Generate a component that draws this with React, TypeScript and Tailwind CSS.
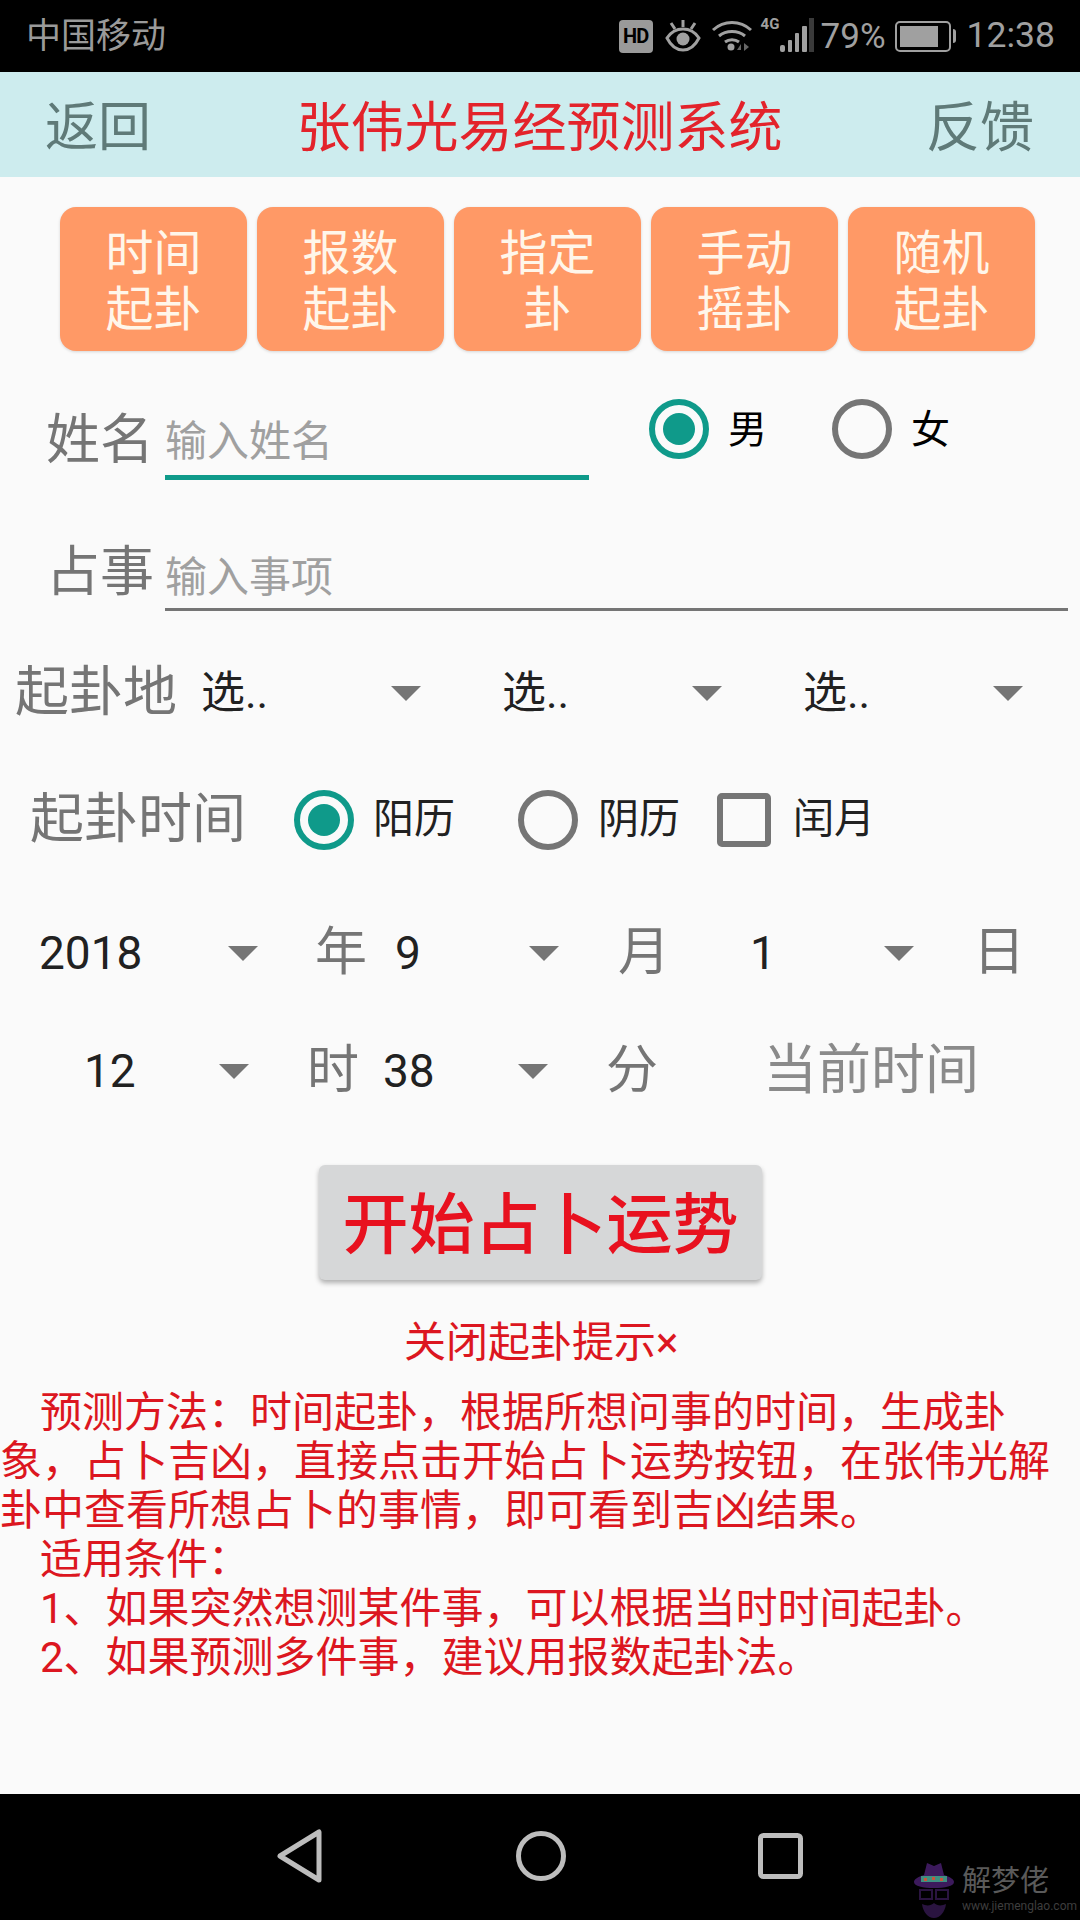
import { ReactNode } from 'react';

const methods = [
  ['时间', '起卦'],
  ['报数', '起卦'],
  ['指定', '卦'],
  ['手动', '摇卦'],
  ['随机', '起卦'],
];

// full-width comma and colon
const tips = [
  { text: '预测方法\uFF1A时间起卦\uFF0C根据所想问事的时间\uFF0C生成卦', indent: true },
  { text: '象\uFF0C占卜吉凶\uFF0C直接点击开始占卜运势按钮\uFF0C在张伟光解', indent: false },
  { text: '卦中查看所想占卜的事情\uFF0C即可看到吉凶结果。', indent: false },
  { text: '适用条件\uFF1A', indent: true },
  { text: '1、如果突然想测某件事\uFF0C可以根据当时时间起卦。', indent: true },
  { text: '2、如果预测多件事\uFF0C建议用报数起卦法。', indent: true },
];

const Radio = ({ checked }: { checked?: boolean }) => (
  <div
    className={`flex h-[60px] w-[60px] shrink-0 items-center justify-center rounded-full border-[6px] ${
      checked ? 'border-[#0f9a8a]' : 'border-[#757575]'
    }`}
  >
    {checked && <div className="h-[32px] w-[32px] rounded-full bg-[#0f9a8a]" />}
  </div>
);

const Arrow = () => <div className="h-0 w-0 border-x-[15px] border-t-[15px] border-x-transparent border-t-[#757575]" />;

// spinner: value on the left, small triangle at the right edge
const Spinner = ({ value, className }: { value: string; className: string }) => (
  <div className={`flex items-center justify-between ${className}`}>
    <span>{value}</span>
    <Arrow />
  </div>
);

const Row = ({ className, children }: { className: string; children: ReactNode }) => (
  <div className={`flex items-center ${className}`}>{children}</div>
);

const StatusIcons = () => (
  <div className="flex items-center text-[#a0a0a0]">
    <div className="flex h-[33px] w-[34px] items-center justify-center rounded-[4px] bg-[#9a9a9a] text-[20px] font-bold leading-none tracking-[-1px] text-black">
      HD
    </div>
    <svg className="ml-[12px]" width="36" height="32" viewBox="0 0 36 32" fill="none" stroke="#a0a0a0" strokeWidth="3">
      <path d="M2 18c4-6 9-9 16-9s12 3 16 9c-4 8-9 12-16 12S6 26 2 18z" />
      <circle cx="18" cy="19" r="6.5" fill="#a0a0a0" stroke="none" />
      <path d="M18 0v7M6 3l4 6M30 3l-4 6" />
    </svg>
    <svg className="ml-[10px]" width="42" height="32" viewBox="0 0 42 32" fill="none" stroke="#a0a0a0" strokeWidth="3">
      <path d="M2 10c11-10 27-10 38 0M8 16c7-6 19-6 26 0M14 22c4-3 10-3 14 0" />
      <circle cx="20" cy="27" r="3.5" fill="#a0a0a0" stroke="none" />
      <path d="M26 30l4-6v6zM33 23v8l5-4z" fill="#666" stroke="none" />
    </svg>
    <div className="relative ml-[8px] h-[36px] w-[54px]">
      <span className="absolute left-0 top-[-2px] text-[15px] font-bold leading-[16px]">4G</span>
      <svg className="absolute left-0 top-0" width="54" height="36" viewBox="0 0 54 36" fill="#a0a0a0">
        <rect x="19" y="27" width="5" height="7" rx="2" />
        <rect x="27" y="22" width="4" height="12" rx="1" />
        <rect x="34" y="15" width="4" height="19" rx="1" />
        <rect x="41" y="8" width="5" height="26" rx="1" />
        <rect x="48" y="0" width="5" height="34" fill="#3a3a3a" />
      </svg>
    </div>
    <span className="ml-[6px] text-[35px] leading-none">79%</span>
    <div className="ml-[9px] flex items-center">
      <div className="h-[31px] w-[56px] rounded-[5px] border-2 border-[#a0a0a0] p-[3px]">
        <div className="h-full w-[38px] bg-[#a0a0a0]" />
      </div>
      <div className="ml-[2px] h-[14px] w-[3px] rounded-r bg-[#a0a0a0]" />
    </div>
    <span className="ml-[11px] text-[35.5px] leading-none">12:38</span>
  </div>
);

export default function App() {
  return (
    <div className="flex h-[1920px] w-[1080px] flex-col overflow-hidden bg-[#fafafa] font-['Roboto','Noto_Sans_CJK_SC',sans-serif]">
      <div className="flex h-[72px] shrink-0 items-center justify-between bg-black pl-[26px] pr-[25px]">
        <span className="text-[35px] leading-none text-[#9a9a9a]">中国移动</span>
        <StatusIcons />
      </div>

      <div className="flex h-[105px] shrink-0 items-center justify-between bg-[#cdecee] pl-[45px] pr-[46px] pt-[8px] text-[53px] leading-none text-[#5f7a78]">
        <span>返回</span>
        <span className="ml-[2px] text-[54px] text-[#e3232b]">张伟光易经预测系统</span>
        <span className="text-[54px]">反馈</span>
      </div>

      <div className="mt-[30px] flex h-[144px] shrink-0 gap-[10px] pl-[60px]">
        {methods.map((m, i) => (
          <div
            key={i}
            className="flex h-[144px] w-[187px] flex-col items-center justify-center rounded-[16px] bg-[#ff9966] pt-[6px] text-[48px] leading-[56px] text-[#fff6ea] shadow-[0_1px_3px_rgba(0,0,0,0.15)]"
          >
            <span>{m[0]}</span>
            <span>{m[1]}</span>
          </div>
        ))}
      </div>

      <div className="relative mt-[40px] flex h-[90px] shrink-0 pl-[46px]">
        <span className="mt-[16px] w-[119px] text-[54px] leading-[68px] text-[#757575]">姓名</span>
        <div className="h-[89px] w-[424px] border-b-[5px] border-[#0f9a8a] pt-[22px] text-[42px] leading-[58px] text-[#a0a0a0]">
          输入姓名
        </div>
        <div className="ml-[60px] mt-[8px] flex h-[60px] items-center text-[39px] leading-none text-black">
          <Radio checked />
          <span className="ml-[19px] pt-[2px]">男</span>
          <div className="ml-[65px]">
            <Radio />
          </div>
          <span className="ml-[19px] pt-[2px]">女</span>
        </div>
      </div>

      <div className="mt-[41px] flex h-[89px] shrink-0 pl-[50px]">
        <span className="ml-[-4px] mt-[17px] w-[119px] text-[54px] leading-[68px] text-[#757575]">占事</span>
        <div className="h-[89px] w-[903px] border-b-[3px] border-[#757575] pt-[27px] text-[42px] leading-[58px] text-[#a0a0a0]">
          输入事项
        </div>
      </div>

      <Row className="mt-[42px] h-[80px] shrink-0 pl-[15px] text-[44px] text-[#212121]">
        <span className="w-[186px] text-[54px] leading-none text-[#757575]">起卦地</span>
        <Spinner value="选.." className="w-[220px]" />
        <Spinner value="选.." className="ml-[81px] w-[220px]" />
        <Spinner value="选.." className="ml-[81px] w-[220px]" />
      </Row>

      <Row className="mt-[47px] h-[80px] shrink-0 pl-[30px] text-[41px] text-[#212121]">
        <span className="w-[264px] text-[54px] leading-none text-[#757575]">起卦时间</span>
        <Radio checked />
        <span className="ml-[19px]">阳历</span>
        <div className="ml-[63px]">
          <Radio />
        </div>
        <span className="ml-[20px]">阴历</span>
        <div className="ml-[37px] h-[54px] w-[54px] rounded-[5px] border-[6px] border-[#757575]" />
        <span className="ml-[22px]">闰月</span>
      </Row>

      <Row className="mt-[58px] h-[70px] shrink-0 pl-[39px] text-[46px] text-[#212121]">
        <Spinner value="2018" className="w-[219px]" />
        <span className="ml-[57px] w-[80px] text-[52px] text-[#757575]">年</span>
        <Spinner value="9" className="w-[164px]" />
        <span className="ml-[59px] w-[132px] text-[52px] text-[#757575]">月</span>
        <Spinner value="1" className="w-[164px]" />
        <span className="ml-[59px] text-[52px] text-[#757575]">日</span>
      </Row>

      <Row className="mt-[48px] h-[70px] shrink-0 pl-[84px] text-[46px] text-[#212121]">
        <Spinner value="12" className="w-[165px]" />
        <span className="ml-[58px] w-[76px] text-[52px] text-[#757575]">时</span>
        <Spinner value="38" className="w-[165px]" />
        <span className="ml-[58px] w-[157px] text-[52px] text-[#757575]">分</span>
        <span className="text-[54px] leading-none text-[#8a8a8a]">当前时间</span>
      </Row>

      <div className="mt-[59px] ml-[319px] flex h-[115px] w-[443px] shrink-0 items-center justify-center rounded-[6px] bg-[#d6d7d8] pt-[6px] text-[66px] font-medium leading-none text-[#e8111f] shadow-[0_3px_5px_rgba(0,0,0,0.3)]">
        开始占卜运势
      </div>

      <div className="mt-[38px] shrink-0 pl-[404px] text-[42px] leading-[50px] text-[#dc1620]">关闭起卦提示×</div>

      <div className="mt-[20px] shrink-0 text-[42px] leading-[49px] text-[#dc1620]">
        {tips.map((t, i) => (
          <p key={i} className={t.indent ? 'pl-[40px]' : ''}>
            {t.text}
          </p>
        ))}
      </div>

      <div className="relative mt-auto flex h-[126px] shrink-0 items-center justify-center gap-[192px] bg-black pb-[2px] pr-[2px]">
        <svg width="48" height="54" viewBox="0 0 48 54" fill="none" stroke="#bdbdbd" strokeWidth="5" strokeLinejoin="round">
          <path d="M43 3v48L4 27z" />
        </svg>
        <svg width="50" height="50" viewBox="0 0 50 50" fill="none" stroke="#bdbdbd" strokeWidth="5">
          <circle cx="25" cy="25" r="22.5" />
        </svg>
        <svg width="45" height="46" viewBox="0 0 45 46" fill="none" stroke="#bdbdbd" strokeWidth="5">
          <rect x="2.5" y="2.5" width="40" height="41" rx="3" />
        </svg>
        <div className="absolute left-[913px] top-[68px] flex w-[167px]">
          <svg className="shrink-0" width="42" height="58" viewBox="0 0 42 58">
            <path d="M11 13L14 1l7 3 7-3 3 12c6 2 10 4 10 7 0 4-9 6-20 6S1 24 1 20c0-3 4-5 10-7z" fill="#3c1a5c" />
            <rect x="8" y="14" width="26" height="6" fill="#3f8f80" />
            <path d="M11 16h3v3h-3zM19 15h3v3h-3zM27 16h3v3h-3z" fill="#c8553d" />
            <path d="M7 28h12v9H7zM23 28h12v9H23z" fill="none" stroke="#2a1440" strokeWidth="2" />
            <path d="M9 42c4 2 9 2 12-1 3 3 8 3 12 1-1 8-6 14-12 14S10 50 9 42z" fill="#2a1440" />
          </svg>
          <div className="ml-[7px] flex flex-col">
            <span className="text-[29px] leading-[38px] text-[#5a5a5a]">解梦佬</span>
            <span className="whitespace-nowrap text-[12px] leading-[12px] text-[#3e3e3e]">www.jiemenglao.com</span>
          </div>
        </div>
      </div>
    </div>
  );
}
